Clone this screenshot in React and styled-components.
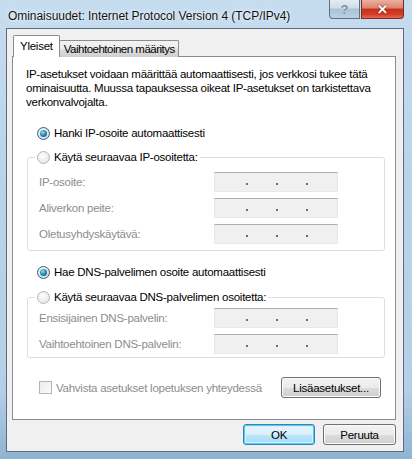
import React from 'react';
import styled, {createGlobalStyle, css} from "styled-components";

const Global = createGlobalStyle`
  html, body {
    margin: 0;
    padding: 0;
    background: #bcd4e8;
  }
  * {
    box-sizing: border-box;
  }
`

const Window = styled.div`
  width: 412px;
  height: 459px;
  overflow: hidden;
  font-family: "Liberation Sans", Arial, sans-serif;
  font-size: 11.5px;
  letter-spacing: -0.25px;
  color: #000;
  background: linear-gradient(180deg, #c6dcef 0%, #bad3ea 40%, #b4cfe7 85%, #8fb3d2 100%);
  display: flex;
  flex-direction: column;
`

const TitleBar = styled.div`
  height: 28px;
  display: flex;
  justify-content: space-between;
  align-items: flex-start;
  padding: 0 8px 0 8px;
`

const Title = styled.div`
  padding-top: 9px;
  font-size: 12px;
  letter-spacing: -0.05px;
  color: #111;
  text-shadow: 0 0 6px #eef6ff, 0 0 2px #fff;
`

const Buttons = styled.div`
  display: flex;
  gap: 1px;
`

const CaptionButton = styled.div`
  height: 19px;
  border: 1px solid #5f6f80;
  border-top: none;
  display: flex;
  align-items: center;
  justify-content: center;
  font-weight: bold;
  font-size: 13px;
  letter-spacing: 0;
  ${p => p.$close ? css`
    width: 43px;
    border-radius: 0 0 4px 0;
    color: #fff;
    border-color: #7a2a20;
    background: linear-gradient(180deg, #eab0a0 0%, #dc8470 45%, #c72f1a 50%, #d23d27 80%, #e46d52 100%);
    text-shadow: 0 0 2px #5a1008;
  ` : css`
    width: 31px;
    border-radius: 0 0 0 4px;
    color: #7d8a96;
    background: linear-gradient(180deg, #e3ecf3 0%, #cfdde8 45%, #a9c2d6 50%, #b8d1e3 100%);
    text-shadow: 0 0 1px #fff;
  `}
`

const Client = styled.div`
  margin: 0 8px 0 6px;
  height: 424px;
  background: #f0f0f0;
  border: 1px solid #5d6c7c;
  padding: 6px 6px 0 5px;
  display: flex;
  flex-direction: column;
`

const TabStrip = styled.div`
  display: flex;
  align-items: flex-end;
  height: 22px;
  padding-left: 1px;
  position: relative;
  z-index: 1;
  margin-bottom: -1px;
`

const Tab = styled.div`
  border: 1px solid #898c95;
  border-bottom: none;
  border-radius: 2px 2px 0 0;
  display: flex;
  align-items: center;
  white-space: nowrap;
  ${p => p.$active ? css`
    height: 22px;
    background: #fff;
    padding: 0 6px 2px;
    margin-right: -1px;
    z-index: 2;
  ` : css`
    height: 17px;
    padding: 0 3px 0 4px;
    letter-spacing: -0.5px;
    background: linear-gradient(180deg, #f3f3f3 0%, #ebebeb 50%, #dddddd 51%, #cfcfcf 100%);
  `}
`

const Panel = styled.div`
  height: 364px;
  margin-right: 1px;
  background: #fff;
  border: 1px solid #898c95;
  padding: 10px 13px 0 13px;
  display: flex;
  flex-direction: column;
`

const Intro = styled.p`
  margin: 0;
  line-height: 14px;
  height: 42px;
  white-space: nowrap;
`

const RadioRow = styled.label`
  display: flex;
  align-items: center;
  gap: 4px;
  height: 14px;
  margin-left: ${p => p.$inset ?? 9}px;
  padding: 0 2px;
  background: #fff;
  white-space: nowrap;
`

const Radio = styled.span`
  width: 13px;
  height: 13px;
  flex-shrink: 0;
  border-radius: 50%;
  border: 1px solid #8f9aa3;
  display: inline-flex;
  align-items: center;
  justify-content: center;
  background: radial-gradient(circle at 40% 35%, #fafafa 0%, #e2e2e2 60%, #c8c8c8 100%);
  ${p => p.$checked && css`
    border-color: #2c628b;
    &::after {
      content: "";
      width: 7px;
      height: 7px;
      border-radius: 50%;
      background: radial-gradient(circle at 40% 35%, #8de6f5 0%, #2a8fb7 45%, #0c4d78 100%);
    }
  `}
  ${p => p.$disabled && css`
    border-color: #b5b5b5;
    background: radial-gradient(circle at 40% 35%, #fdfdfd 0%, #ececec 60%, #d6d6d6 100%);
  `}
`

const Group = styled.fieldset`
  margin: 0 0 0 1px;
  width: 358px;
  border: 1px solid #d5dfe5;
  border-radius: 3px;
  padding: 0 0 ${p => p.$bottom}px 11px;
`

const Legend = styled.legend`
  padding: 0;
  margin-left: -4px;
  height: 14px;
  line-height: 14px;
`

const FieldGrid = styled.div`
  display: grid;
  grid-template-columns: 175px 124px;
  row-gap: 6px;
  padding-top: ${p => p.$top}px;
`

const FieldLabel = styled.div`
  color: #8d8d8d;
  display: flex;
  align-items: center;
  height: 20px;
  white-space: nowrap;
`

const IpBox = styled.div`
  height: 20px;
  background: #f0f0f0;
  border: 1px solid #e3e9ef;
  border-top-color: #abadb3;
  display: grid;
  grid-template-columns: 32px 30px 30px 1fr;
`

const IpDot = styled.span`
  position: relative;
  &::after {
    content: "";
    position: absolute;
    right: -1px;
    top: 10px;
    width: 2px;
    height: 2px;
    background: #6d6d6d;
  }
`

const Spacer = styled.div`
  height: ${p => p.$h}px;
  flex-shrink: 0;
`

const BottomRow = styled.div`
  display: flex;
  align-items: center;
  justify-content: space-between;
  padding-left: 13px;
  padding-right: 1px;
`

const CheckLabel = styled.label`
  display: flex;
  align-items: center;
  gap: 4px;
  color: #8d8d8d;
  white-space: nowrap;
`

const Check = styled.span`
  width: 13px;
  height: 13px;
  border: 1px solid #b5b5b5;
  background: linear-gradient(135deg, #ececec 0%, #fbfbfb 100%);
`

const Button = styled.button`
  font-family: inherit;
  font-size: 11.5px;
  letter-spacing: -0.25px;
  color: #000;
  height: ${p => p.$h || 21}px;
  width: ${p => p.$w}px;
  border: 1px solid #707070;
  border-radius: 3px;
  background: linear-gradient(180deg, #f2f2f2 0%, #ebebeb 50%, #dddddd 51%, #cfcfcf 100%);
  box-shadow: inset 0 0 0 1px #fcfcfc;
  padding: 0;
  ${p => p.$default && css`
    border-color: #3c7fb1;
    box-shadow: inset 0 0 0 1px #48d1f6, inset 0 0 0 2px #d6f1fb;
    background: linear-gradient(180deg, #eaf6fd 0%, #d9f0fc 50%, #bee6fd 51%, #a7d9f5 100%);
  `}
`

const Footer = styled.div`
  display: flex;
  justify-content: flex-end;
  gap: 8px;
  padding-top: 4px;
  padding-right: 1px;
`

const IpField = ({label}) => (
  <>
    <FieldLabel>{label}</FieldLabel>
    <IpBox>
      <IpDot/><IpDot/><IpDot/><span/>
    </IpBox>
  </>
)

const App = () => {
  return (
    <Window>
      <Global/>
      <TitleBar>
        <Title>Ominaisuudet: Internet Protocol Version 4 (TCP/IPv4)</Title>
        <Buttons>
          <CaptionButton>?</CaptionButton>
          <CaptionButton $close>✕</CaptionButton>
        </Buttons>
      </TitleBar>
      <Client>
        <TabStrip>
          <Tab $active>Yleiset</Tab>
          <Tab>Vaihtoehtoinen määritys</Tab>
        </TabStrip>
        <Panel>
          <Intro>
            IP-asetukset voidaan määrittää automaattisesti, jos verkkosi tukee tätä<br/>
            ominaisuutta. Muussa tapauksessa oikeat IP-asetukset on tarkistettava<br/>
            verkonvalvojalta.
          </Intro>
          <Spacer $h={17}/>
          <RadioRow><Radio $checked/>Hanki IP-osoite automaattisesti</RadioRow>
          <Spacer $h={10}/>
          <Group $bottom={6}>
            <Legend><RadioRow as="span" $inset={0}><Radio $disabled/>Käytä seuraavaa IP-osoitetta:</RadioRow></Legend>
            <FieldGrid $top={8}>
              <IpField label="IP-osoite:"/>
              <IpField label="Aliverkon peite:"/>
              <IpField label="Oletusyhdyskäytävä:"/>
            </FieldGrid>
          </Group>
          <Spacer $h={14}/>
          <RadioRow><Radio $checked/>Hae DNS-palvelimen osoite automaattisesti</RadioRow>
          <Spacer $h={11}/>
          <Group $bottom={3}>
            <Legend><RadioRow as="span" $inset={0}><Radio $disabled/>Käytä seuraavaa DNS-palvelimen osoitetta:</RadioRow></Legend>
            <FieldGrid $top={4}>
              <IpField label="Ensisijainen DNS-palvelin:"/>
              <IpField label="Vaihtoehtoinen DNS-palvelin:"/>
            </FieldGrid>
          </Group>
          <Spacer $h={19}/>
          <BottomRow>
            <CheckLabel><Check/>Vahvista asetukset lopetuksen yhteydessä</CheckLabel>
            <Button $w={100}>Lisäasetukset...</Button>
          </BottomRow>
        </Panel>
        <Footer>
          <Button $default $w={72}>OK</Button>
          <Button $w={73}>Peruuta</Button>
        </Footer>
      </Client>
    </Window>
  );
};

export default App;
